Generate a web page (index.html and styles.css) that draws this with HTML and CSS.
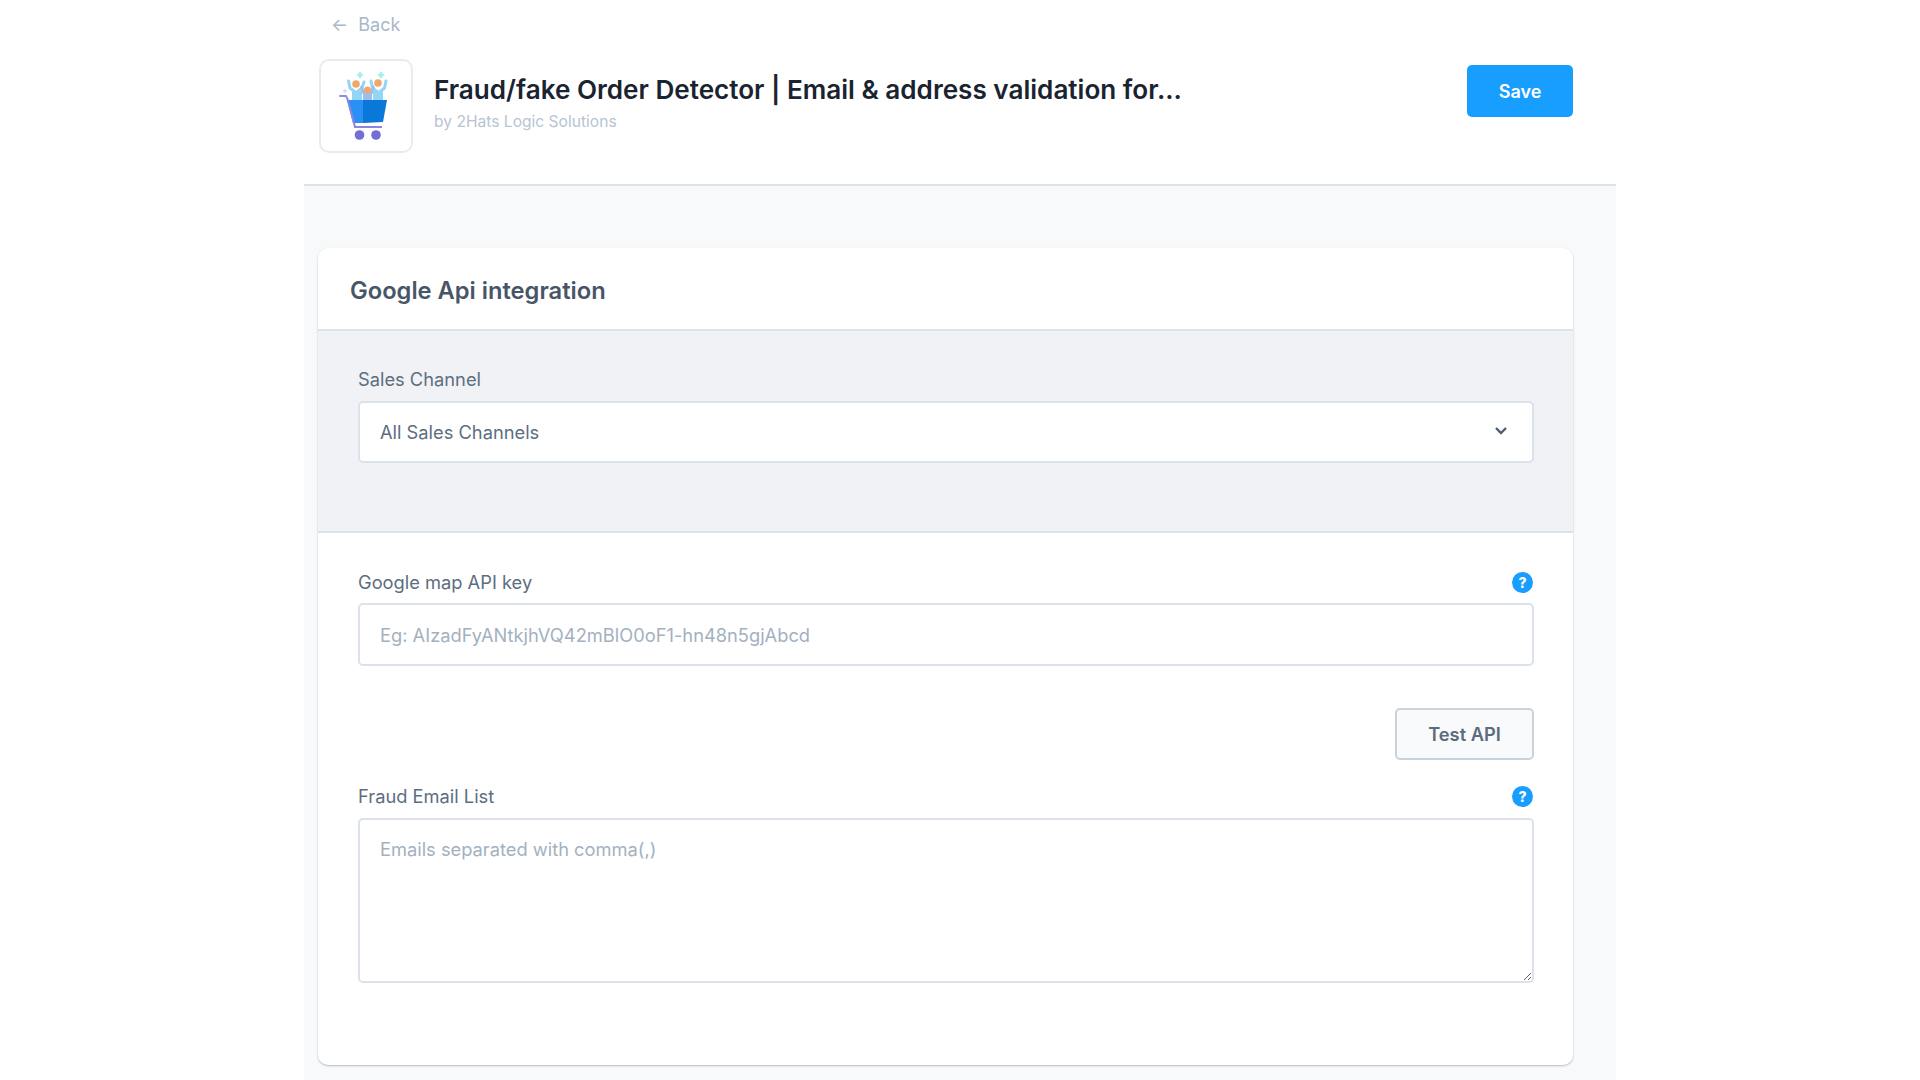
FILE: index.html
```html
<!DOCTYPE html>
<html lang="en">
<head>
    <meta charset="UTF-8">
    <title>Google Api integration</title>
    <link rel="stylesheet" href="styles.css">
</head>
<body>
<div class="page">
    <header class="top">
        <a class="back" href="#"><span class="back-arrow">&#8592;</span> Back</a>
        <div class="app-row">
            <div class="app-logo">
                <svg width="90" height="90" viewBox="321 61 90 90">
                    <path d="M360 71l1.500 2.500 2.500 1.500-2.500 1.500-1.500 2.500-1.500-2.500-2.500-1.500 2.500-1.500z" fill="#a8efec"/>
                    <path d="M381 71l1.500 2.500 2.500 1.500-2.500 1.500-1.500 2.500-1.500-2.500-2.500-1.500 2.500-1.500z" fill="#a8efec"/>
                    <path d="M345 88.500l1 1.500 1.500 1-1.500 1-1 1.500-1-1.500-1.500-1 1.500-1z" fill="#d6dcf5"/>
                    <g fill="none" stroke="#93d5f5" stroke-width="3" stroke-linecap="round" stroke-linejoin="round">
                        <path d="M348.500 81l1.500 7 5 4h2l5-4 2-6"/>
                        <path d="M371 81l1.500 7 5 4h2l5-4 1.500-7"/>
                    </g>
                    <rect x="352" y="91" width="10" height="10" fill="#93d5f5"/>
                    <rect x="373" y="91" width="10" height="10" fill="#93d5f5"/>
                    <circle cx="356" cy="84" r="3.800" fill="#f0a868"/>
                    <circle cx="378" cy="83" r="3.800" fill="#f0a868"/>
                    <path d="M361.500 87l2 6h8l2-6" fill="none" stroke="#9dbdec" stroke-width="2.600" stroke-linecap="round" stroke-linejoin="round"/>
                    <rect x="363" y="93" width="9" height="8" fill="#9dbdec"/>
                    <circle cx="367.500" cy="90" r="3.600" fill="#f0a868"/>
                    <path d="M340 96h6l1.500 3" fill="none" stroke="#8f8de0" stroke-width="1.800" stroke-linecap="round"/>
                    <path d="M347 100h16v23h-10z" fill="#2b90f5"/>
                    <path d="M363 100h24l-4 22-20 1z" fill="#0a78d8"/>
                    <path d="M347.500 99l7.500 28h27" fill="none" stroke="#8886de" stroke-width="2"/>
                    <circle cx="359.500" cy="135" r="4.800" fill="#6f6fd6"/>
                    <circle cx="376" cy="135" r="4.800" fill="#6f6fd6"/>
                </svg>
            </div>
            <div class="app-text">
                <h1 class="app-title">Fraud/fake Order Detector | Email &amp; address validation for...</h1>
                <p class="app-by">by 2Hats Logic Solutions</p>
            </div>
            <button class="btn-save">Save</button>
        </div>
    </header>

    <main class="content">
        <section class="card">
            <h2 class="card-title">Google Api integration</h2>

            <div class="channel">
                <label class="field-label">Sales Channel</label>
                <div class="select">
                    <span>All Sales Channels</span>
                    <svg class="chevron" width="14" height="10" viewBox="0 0 14 10"><path d="M2 2l5 5 5-5" fill="none" stroke="#4f5d6e" stroke-width="2.400"/></svg>
                </div>
            </div>

            <div class="card-body">
                <div class="label-row">
                    <label class="field-label">Google map API key</label>
                    <span class="help">?</span>
                </div>
                <input class="input" type="text" placeholder="Eg: AIzadFyANtkjhVQ42mBlO0oF1-hn48n5gjAbcd">

                <div class="test-row">
                    <button class="btn-test">Test API</button>
                </div>

                <div class="label-row">
                    <label class="field-label">Fraud Email List</label>
                    <span class="help">?</span>
                </div>
                <textarea class="textarea" placeholder="Emails separated with comma(,)"></textarea>
            </div>
        </section>
    </main>
</div>
</body>
</html>
```

FILE: styles.css
```css
* {
    margin: 0;
    padding: 0;
    box-sizing: border-box;
}
html, body {
    height: 1080px;
    overflow: hidden;
    background: #fff;
}
body {
    font-family: Inter, "Liberation Sans", sans-serif;
    color: #52667a;
}
.page {
    width: 1312px;
    height: 1080px;
    margin-left: 304px;
    background: #f8f9fb;
}

/* top bar */
.top {
    height: 186px;
    padding: 14px 43px 0 15px;
    background: #fff;
    border-bottom: 2px solid #dde3ea;
}
.back {
    display: block;
    height: 22px;
    margin-left: 12px;
    font-size: 18px;
    line-height: 22px;
    color: #a9b8c9;
    text-decoration: none;
}
.back-arrow {
    margin-right: 5px;
}
.app-row {
    display: flex;
    align-items: flex-start;
    margin-top: 23px;
}
.app-logo {
    flex: none;
    width: 94px;
    height: 94px;
    background: #fff;
    border: 2px solid #e9ecef;
    border-radius: 10px;
}
.app-logo svg {
    display: block;
}
.app-text {
    flex: 1;
    margin: 13px 0 0 21px;
}
.app-title {
    font-size: 26.1px;
    line-height: 36px;
    font-weight: 600;
    color: #1a2330;
}
.app-by {
    margin-top: 4px;
    font-size: 15.6px;
    line-height: 20px;
    color: #b7c4d3;
}
.btn-save {
    flex: none;
    width: 106px;
    height: 52px;
    margin-top: 6px;
    font: 600 18px Inter, sans-serif;
    color: #fff;
    background: #189eff;
    border: 0;
    border-radius: 5px;
}

/* card */
.content {
    padding: 62px 43px 0 14px;
}
.card {
    height: 817px;
    background: #fff;
    border-radius: 10px;
    box-shadow: 0 1px 2px rgba(60, 75, 90, .35);
}
.card-title {
    height: 83px;
    padding: 2px 32px 0;
    font-size: 23.7px;
    line-height: 82px;
    font-weight: 600;
    color: #465668;
    border-bottom: 2px solid #dde3ea;
}
.channel {
    height: 202px;
    padding: 37px 39px 0 40px;
    background: #f0f2f5;
    border-bottom: 2px solid #dde3ea;
}
.card-body {
    padding: 38px 39px 0 40px;
}
.field-label {
    display: block;
    height: 24px;
    font-size: 18.3px;
    line-height: 22px;
    color: #5c6e80;
}
.select {
    display: flex;
    align-items: center;
    justify-content: space-between;
    height: 62px;
    margin-top: 9px;
    padding: 0 24px 0 20px;
    font-size: 18.3px;
    color: #5c6e80;
    background: #fff;
    border: 2px solid #dbe2ea;
    border-radius: 5px;
}
.chevron {
    margin-bottom: 2px;
}
.label-row {
    display: flex;
    align-items: center;
    justify-content: space-between;
    height: 24px;
}
.help {
    width: 21px;
    height: 21px;
    margin: 0 1px 2px 0;
    font-size: 14px;
    line-height: 21px;
    font-weight: 800;
    text-align: center;
    color: #fff;
    background: #189eff;
    border-radius: 50%;
}
.input, .textarea {
    display: block;
    width: 100%;
    padding: 0 20px;
    font: 18.3px Inter, sans-serif;
    color: #5c6e80;
    background: #fff;
    border: 2px solid #dbe2ea;
    border-radius: 5px;
    outline: none;
}
.input {
    height: 63px;
    margin-top: 8px;
}
.textarea {
    height: 165px;
    margin-top: 9px;
    padding-top: 17px;
    line-height: 24px;
}
.input::placeholder, .textarea::placeholder {
    color: #a3b1bf;
    opacity: 1;
}
.test-row {
    display: flex;
    justify-content: flex-end;
    margin: 42px 0 25px;
}
.btn-test {
    width: 139px;
    height: 52px;
    font: 600 18.3px Inter, sans-serif;
    color: #5b6c7e;
    background: #f9fafc;
    border: 2px solid #c9d3dc;
    border-radius: 5px;
}
```
